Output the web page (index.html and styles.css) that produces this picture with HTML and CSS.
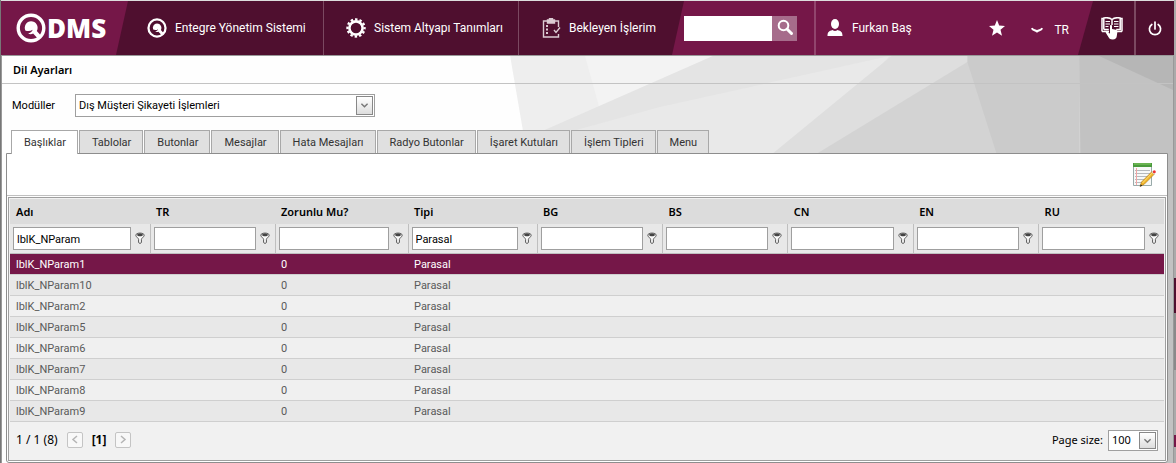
FILE: index.html
```
<!DOCTYPE html>
<html lang="tr">
<head>
    <meta charset="UTF-8">
    <meta name="viewport" content="width=device-width, initial-scale=1.0">
    <title>QDMS - Dil Ayarları</title>
    <link rel="stylesheet" href="styles.css">
</head>
<body>
    <svg class="symbols" aria-hidden="true">
        <symbol id="q" viewBox="0 0 30 30">
            <circle cx="15" cy="15" r="12.8" fill="none" stroke="#fff" stroke-width="3.4"/>
            <path d="M15 8.200a6.600 6.600 0 0 1 5.800 9.800l4.700 5.200-3 3-5.400-5.600c-1.500.8-3.600.7-5-.2 2-.4 3.800-1.500 4.600-3.600-2.200 1.400-5 1.700-7.400.6A6.600 6.600 0 0 1 15 8.200z" fill="#fff"/>
        </symbol>
        <symbol id="funnel" viewBox="0 0 10 12">
            <path d="M.8 3.200C.8 .4 9.200 .4 9.200 3.200c0 1.600-2.800 3-2.800 4.200v3.100c0 1-2.800 1-2.800 0V7.400C3.600 6.200.8 4.800.8 3.200z" fill="#fafafa" stroke="#555"/>
            <path d="M2 2.900C2.500 1 7.500 1 8 2.900 7.500 4.800 2.500 4.800 2 2.900z" fill="#444"/>
        </symbol>
    </svg>

    <div class="page">
        <header class="topbar">
            <a class="logo" href="#">
                <svg class="logo-mark"><use href="#q"/></svg>
                <span>DMS</span>
            </a>
            <nav class="menu">
                <a class="menu-first" href="#">
                    <svg class="icon"><use href="#q"/></svg>
                    <span>Entegre Yönetim Sistemi</span>
                </a>
                <a class="menu-second" href="#">
                    <svg class="icon" viewBox="0 0 20 20">
                        <circle cx="10" cy="10" r="6.600" fill="none" stroke="#fff" stroke-width="2.600"/>
                        <circle cx="10" cy="10" r="8.600" fill="none" stroke="#fff" stroke-width="2.200" stroke-dasharray="2.500 2" stroke-dashoffset="1.200"/>
                    </svg>
                    <span>Sistem Altyapı Tanımları</span>
                </a>
                <a class="menu-third" href="#">
                    <svg class="icon" viewBox="0 0 20 20" fill="none" stroke="#dccbd3" stroke-width="1.400">
                        <path d="M6 3H2.500v16h15v-3M14 3h3.500v6"/>
                        <path d="M6.500 2h2V.8h3V2h2v3h-7z" fill="#dccbd3"/>
                        <path d="M5 8h2M5 11.500h2M5 15h2" stroke-width="2"/>
                        <path d="M13 12l2 2.500 4-5"/>
                    </svg>
                    <span>Bekleyen İşlerim</span>
                </a>
            </nav>
            <form class="search">
                <input type="search" aria-label="Ara">
                <button type="button" aria-label="Ara">
                    <svg viewBox="0 0 25 25" fill="none" stroke="#fff">
                        <circle cx="11.500" cy="9.500" r="4.800" stroke-width="2"/>
                        <path d="M15 13l4.500 4.500" stroke-width="3" stroke-linecap="round"/>
                    </svg>
                </button>
            </form>
            <a class="user" href="#">
                <svg viewBox="0 0 16 18" fill="#fff">
                    <ellipse cx="8" cy="5" rx="4" ry="5"/>
                    <path d="M.5 17c0-4 1.500-5 5-6 1.500 1.300 3.500 1.300 5 0 3.500 1 5 2 5 6z"/>
                </svg>
                <span>Furkan Baş</span>
            </a>
            <button class="star" type="button" aria-label="Favoriler">
                <svg viewBox="0 0 16 16"><path d="M8 0l2.200 5.600 5.800.4-4.500 3.700 1.500 6L8 12.400 3 15.700l1.500-6L0 6l5.800-.4z" fill="#fff"/></svg>
            </button>
            <button class="lang" type="button">
                <svg viewBox="0 0 12 6"><path d="M.8 1.200C2 4 4 2.700 6 4.500 8 2.700 10 4 11.200 1.200" fill="none" stroke="#fff" stroke-width="2"/></svg>
                <span>TR</span>
            </button>
            <div class="tools">
                <button class="book" type="button" aria-label="Yardım">
                    <svg viewBox="0 0 22 23">
                        <path d="M1 14.500V1.500h1.500M21 14.500V1.500h-1.500M1 14.500h7M14 14.500h7M2.800 12.500V1c3-.6 6-.3 8.200 1.500C13.200.7 16.200.4 19.200 1v11.500h-4M2.800 12.500h5M11 2.500V8" fill="none" stroke="#fff" stroke-width="1.500"/>
                        <path d="M4.500 4.500h4.500M4.500 7h4.500M4.500 9.500h3M13 4.500h4.500M13 7h4.500M13 9.500h4.500" stroke="#fff"/>
                        <path d="M9 9c0-1.300 2-1.300 2 0v3l4 .8c1 .2 1.500 1 1.400 2l-.6 4.200c-.2 2-1.500 3.500-4 3.500-3 0-3.600-1-5-3.500l-2.200-3.500c.8-1.300 2-1.100 3 0L9 16.800z" fill="#fff"/>
                    </svg>
                </button>
                <button class="power" type="button" aria-label="Çıkış">
                    <svg viewBox="0 0 14 15" fill="none" stroke="#fff" stroke-width="1.700" stroke-linecap="round"><path d="M7 1v7M3.800 3.500a5.600 5.600 0 1 0 6.400 0"/></svg>
                </button>
            </div>
        </header>

        <main class="content">
            <svg class="backdrop" viewBox="1 56 1173 407" preserveAspectRatio="none" aria-hidden="true">
                <path d="M0 56H1176V463H0z" fill="#fefefe"/>
                <path d="M510 56H1176V463H580z" fill="#eee"/>
                <path d="M585 56H713L600 110z" fill="#f3f3f3"/>
                <path d="M713 56L540 132 600 160H1176V56z" fill="#e4e4e4"/>
                <path d="M890 56L660 107 540 140V200H760z" fill="#e9e9e9"/>
                <path d="M892 56L770 156H1176V56z" fill="#dedede"/>
                <path d="M968 62L815 155V200H1176V56z" fill="#d3d3d3"/>
                <path d="M968 56V62L997 153 1080 200V56z" fill="#cbcbcb"/>
                <path d="M1080 56L1085 463H1176V56z" fill="#c2c2c2"/>
                <path d="M1100 56L1176 91V56z" fill="#b6b6b6"/>
            </svg>
            <h1>Dil Ayarları</h1>
            <div class="module">
                <label for="module">Modüller</label>
                <div class="dropdown">
                    <select id="module"><option>Dış Müşteri Şikayeti İşlemleri</option></select>
                    <svg class="arrow" viewBox="0 0 17 19"><path d="M5 7.500l3.500 3.500L12 7.500" fill="none" stroke="#777" stroke-width="1.600"/></svg>
                </div>
            </div>

            <div class="tabs" role="tablist">
                <button class="active" type="button" role="tab" aria-selected="true">Başlıklar</button>
                <button type="button" role="tab">Tablolar</button>
                <button type="button" role="tab">Butonlar</button>
                <button type="button" role="tab">Mesajlar</button>
                <button type="button" role="tab">Hata Mesajları</button>
                <button type="button" role="tab">Radyo Butonlar</button>
                <button type="button" role="tab">İşaret Kutuları</button>
                <button type="button" role="tab">İşlem Tipleri</button>
                <button type="button" role="tab">Menu</button>
            </div>

            <section class="panel">
                <div class="toolbar">
                    <button type="button" aria-label="Düzenle">
                        <svg viewBox="0 0 24 25">
                            <path d="M1.500 1.500h18v22h-18z" fill="#f7f9f8" stroke="#9aa"/>
                            <path d="M1 1h19v4H1z" fill="#4a9a3c"/>
                            <path d="M2 2h17" stroke="#8c6"/>
                            <path d="M3 8.500h15M3 11.500h15M3 14.500h15M3 17.500h12M3 20.500h8" stroke="#b5babd"/>
                            <path d="M4.500 6v17" stroke="#f3a5a5"/>
                            <path d="M8 24.500l1.500-4.500L20 9.500l2.500 2.500L12 22.500z" fill="#f0b429" stroke="#a9761c" stroke-width=".6"/>
                            <path d="M10.500 21L20.700 10.500" stroke="#ffe27a"/>
                            <path d="M8 24.500l.8-2.300 1.500 1.500z" fill="#222"/>
                            <path d="M19.500 10l1.200-1.200 2.500 2.500L22 12.500z" fill="#ddd"/>
                            <circle cx="22.300" cy="9.800" r="1.500" fill="#e33"/>
                        </svg>
                    </button>
                </div>

                <div class="grid">
                    <table>
                        <colgroup>
                            <col class="col-name"><col class="col-tr"><col class="col-required"><col class="col-type">
                            <col><col><col><col><col>
                        </colgroup>
                        <thead>
                            <tr>
                                <th>Adı</th><th>TR</th><th>Zorunlu Mu?</th><th>Tipi</th><th>BG</th><th>BS</th><th>CN</th><th>EN</th><th>RU</th>
                            </tr>
                            <tr class="filters">
                                <td><div><input type="text" aria-label="Adı" value="lblK_NParam"><button type="button" aria-label="Filtre"><svg><use href="#funnel"/></svg></button></div></td>
                                <td><div><input type="text" aria-label="TR"><button type="button" aria-label="Filtre"><svg><use href="#funnel"/></svg></button></div></td>
                                <td><div><input type="text" aria-label="Zorunlu Mu?"><button type="button" aria-label="Filtre"><svg><use href="#funnel"/></svg></button></div></td>
                                <td><div><input type="text" aria-label="Tipi" value="Parasal"><button type="button" aria-label="Filtre"><svg><use href="#funnel"/></svg></button></div></td>
                                <td><div><input type="text" aria-label="BG"><button type="button" aria-label="Filtre"><svg><use href="#funnel"/></svg></button></div></td>
                                <td><div><input type="text" aria-label="BS"><button type="button" aria-label="Filtre"><svg><use href="#funnel"/></svg></button></div></td>
                                <td><div><input type="text" aria-label="CN"><button type="button" aria-label="Filtre"><svg><use href="#funnel"/></svg></button></div></td>
                                <td><div><input type="text" aria-label="EN"><button type="button" aria-label="Filtre"><svg><use href="#funnel"/></svg></button></div></td>
                                <td><div><input type="text" aria-label="RU"><button type="button" aria-label="Filtre"><svg><use href="#funnel"/></svg></button></div></td>
                            </tr>
                        </thead>
                        <tbody>
                            <tr class="selected"><td>lblK_NParam1</td><td></td><td>0</td><td>Parasal</td><td></td><td></td><td></td><td></td><td></td></tr>
                            <tr><td>lblK_NParam10</td><td></td><td>0</td><td>Parasal</td><td></td><td></td><td></td><td></td><td></td></tr>
                            <tr><td>lblK_NParam2</td><td></td><td>0</td><td>Parasal</td><td></td><td></td><td></td><td></td><td></td></tr>
                            <tr><td>lblK_NParam5</td><td></td><td>0</td><td>Parasal</td><td></td><td></td><td></td><td></td><td></td></tr>
                            <tr><td>lblK_NParam6</td><td></td><td>0</td><td>Parasal</td><td></td><td></td><td></td><td></td><td></td></tr>
                            <tr><td>lblK_NParam7</td><td></td><td>0</td><td>Parasal</td><td></td><td></td><td></td><td></td><td></td></tr>
                            <tr><td>lblK_NParam8</td><td></td><td>0</td><td>Parasal</td><td></td><td></td><td></td><td></td><td></td></tr>
                            <tr><td>lblK_NParam9</td><td></td><td>0</td><td>Parasal</td><td></td><td></td><td></td><td></td><td></td></tr>
                        </tbody>
                    </table>
                    <div class="pager">
                        <span>1 / 1 (8)</span>
                        <button type="button" aria-label="Önceki"><svg viewBox="0 0 14 13"><path d="M9 3L5 6.500 9 10" fill="none" stroke="#b5b5b5" stroke-width="1.500"/></svg></button>
                        <b>[1]</b>
                        <button type="button" aria-label="Sonraki"><svg viewBox="0 0 14 13"><path d="M5 3l4 3.500L5 10" fill="none" stroke="#b5b5b5" stroke-width="1.500"/></svg></button>
                        <label for="pageSize">Page size:</label>
                        <div class="dropdown small">
                            <select id="pageSize"><option>100</option></select>
                            <svg class="arrow" viewBox="0 0 17 17"><path d="M5 7l3.500 3.500L12 7" fill="none" stroke="#777" stroke-width="1.600"/></svg>
                        </div>
                    </div>
                </div>
            </section>
        </main>
    </div>
</body>
</html>
```
FILE: styles.css
```
* {
    box-sizing: border-box;
}
body {
    margin: 0;
    background: linear-gradient(#aaa 278px, #4f0f2f 278px, #4f0f2f 313px, #8a8a8a 313px, #8a8a8a 370px, #aaa 370px, #aaa 435px, #751748 435px, #751748 447px, #aaa 447px);
    font-family: Roboto, Tahoma, sans-serif;
    font-size: 11px;
    line-height: 16px;
    color: #000;
}
button, input, select {
    font: inherit;
    color: inherit;
    margin: 0;
    padding: 0;
    border: 0;
    border-radius: 0;
    background: none;
}
button {
    cursor: pointer;
}
a {
    color: inherit;
    text-decoration: none;
}
svg {
    display: block;
}
.symbols {
    position: absolute;
    width: 0;
    height: 0;
}
.page {
    margin-right: 2px;
    padding-top: 1px;
    border-left: 1px solid #777;
    background-color: #ddd;
}

/* Top bar */
.topbar {
    display: flex;
    height: 54px;
    background-color: #751748;
    color: #fff;
    font-size: 12px;
}
.topbar > *, .menu a, .tools button {
    display: flex;
    align-items: center;
}
.logo {
    width: 115px;
    padding-left: 15px;
    gap: 1px;
    font-family: "Open Sans", sans-serif;
    font-size: 26px;
    font-weight: 800;
}
.logo-mark {
    width: 30px;
    height: 30px;
}
.menu {
    flex: 0 0 568px;
    background-color: #4f0f2f;
    clip-path: polygon(12px 0, 100% 0, calc(100% - 12px) 100%, 0 100%);
}
.menu a {
    align-self: stretch;
    gap: 8px;
}
.menu-first {
    width: 207px;
    padding-left: 31px;
}
.menu-second {
    width: 195px;
    padding-left: 22px;
    border-left: 1px solid #7b4961;
}
.menu-third {
    padding-left: 22px;
    border-left: 1px solid #7b4961;
}
.icon {
    width: 20px;
    height: 20px;
}
.search input {
    width: 88px;
    height: 25px;
    background-color: #fff;
    color: #000;
}
.search button {
    width: 25px;
    height: 25px;
    background-color: #a66c8b;
}
.user {
    margin-left: 17px;
    padding-left: 11px;
    gap: 9px;
    border-left: 2px solid #91456d;
}
.user svg {
    width: 16px;
    height: 18px;
}
.star {
    margin-left: auto;
}
.star svg {
    width: 16px;
    height: 16px;
}
.lang {
    margin: 4px 9px 0 26px;
    gap: 11px;
}
.lang svg {
    width: 12px;
    height: 6px;
}
.tools {
    flex: 0 0 96px;
    background-color: #4f0f2f;
    clip-path: polygon(15px 0, 100% 0, 100% 100%, 0 100%);
}
.tools button {
    align-self: stretch;
}
.book {
    width: 56px;
    padding-left: 23px;
}
.book svg {
    width: 22px;
    height: 23px;
}
.power {
    flex: 1;
    padding-left: 12px;
    border-left: 2px solid #7b4961;
}
.power svg {
    width: 14px;
    height: 15px;
}

/* Page content */
.content {
    position: relative;
    z-index: 0;
    min-height: calc(100vh - 55px);
    padding: 0 5px 1px 4px;
    border: solid #999;
    border-width: 1px 1px 0;
}
.backdrop {
    position: absolute;
    inset: 0;
    z-index: -1;
    width: 100%;
    height: 100%;
}
h1 {
    margin: 0 -5px 0 -4px;
    padding: 6px 11px 5px;
    border-bottom: 1px solid #c3c3c3;
    font-family: "Noto Sans", Tahoma, sans-serif;
    font-size: 11px;
    font-weight: 600;
}
.module {
    display: flex;
    align-items: center;
    padding: 10px 6px 13px;
}
.module label {
    width: 63px;
}
.dropdown {
    position: relative;
    width: 300px;
}
.dropdown select {
    appearance: none;
    display: block;
    width: 100%;
    height: 23px;
    padding: 1px 0 0 3px;
    border: 1px solid #9f9f9f;
    background-color: #fff;
}
.arrow {
    position: absolute;
    top: 2px;
    right: 2px;
    width: 17px;
    height: 19px;
    border: 1px solid #888;
    background: linear-gradient(#fff, #ddd);
    pointer-events: none;
}
.tabs {
    display: flex;
    gap: 1px;
    padding-left: 5px;
}
.tabs button {
    height: 23px;
    padding: 1px 11px 0 12px;
    border: 1px solid #a8a8a8;
    border-bottom: 0;
    background-color: #e0e0e0;
    color: #333;
}
.tabs .active {
    background-color: #fff;
    margin-bottom: -1px;
    height: 24px;
    padding-top: 0;
    z-index: 1;
}
.panel {
    border: 1px solid #8d8d8d;
    border-radius: 0 0 3px 3px;
    background-color: #fff;
}
.toolbar {
    display: flex;
    justify-content: flex-end;
    padding: 8px 11px;
    border-bottom: 1px solid #c0c0c0;
}
.toolbar svg {
    width: 24px;
    height: 25px;
}
.grid {
    margin: 1px;
    padding: 1px;
    border: 1px solid #9f9f9f;
    background-color: #f1f1f1;
}

/* Grid */
table {
    width: 100%;
    table-layout: fixed;
    border-collapse: collapse;
}
.col-name { width: 140px; }
.col-tr { width: 125px; }
.col-required { width: 133px; }
.col-type { width: 129px; }
th {
    height: 25px;
    padding: 0 6px;
    background-color: #dcdcdc;
    font-family: "Noto Sans", Tahoma, sans-serif;
    font-weight: 600;
    text-align: left;
}
.filters td {
    height: 29px;
    padding: 0 5px 0 3px;
    border: solid #bfbfbf;
    border-width: 0 1px 1px 0;
    background-color: #e8e8e8;
}
.filters td:last-child {
    border-right: 0;
}
.filters div {
    display: flex;
    align-items: center;
    gap: 4px;
}
.filters input {
    flex: 1;
    min-width: 0;
    height: 23px;
    padding: 3px 3px 0;
    border: 1px solid #9f9f9f;
    background-color: #fff;
}
.filters svg {
    width: 10px;
    height: 12px;
}
tbody td {
    height: 21px;
    padding: 2px 6px 0;
    border-bottom: 1px solid #cfcfcf;
    color: #5a5a5a;
}
tbody tr:nth-child(even) {
    background-color: #e8e8e8;
}
tbody tr:nth-child(odd) {
    background-color: #f0f0f0;
}
tbody tr.selected {
    background-color: #751748;
}
tbody .selected td {
    color: #fff;
}
.pager {
    display: flex;
    align-items: center;
    height: 37px;
    padding: 0 6px;
    gap: 9px;
    font-family: "Noto Sans", Tahoma, sans-serif;
    font-size: 12px;
}
.pager button {
    padding: 0 0 1px;
    border: 1px solid #c4c4c4;
    border-radius: 2px;
    background-color: #f8f8f8;
}
.pager button svg {
    width: 14px;
    height: 13px;
}
.pager label {
    margin: 0 -4px 0 auto;
    font-size: 11px;
}
.small {
    width: 50px;
}
.small select {
    height: 21px;
    padding-top: 0;
    font-size: 11px;
}
.small .arrow {
    height: 17px;
}
```
